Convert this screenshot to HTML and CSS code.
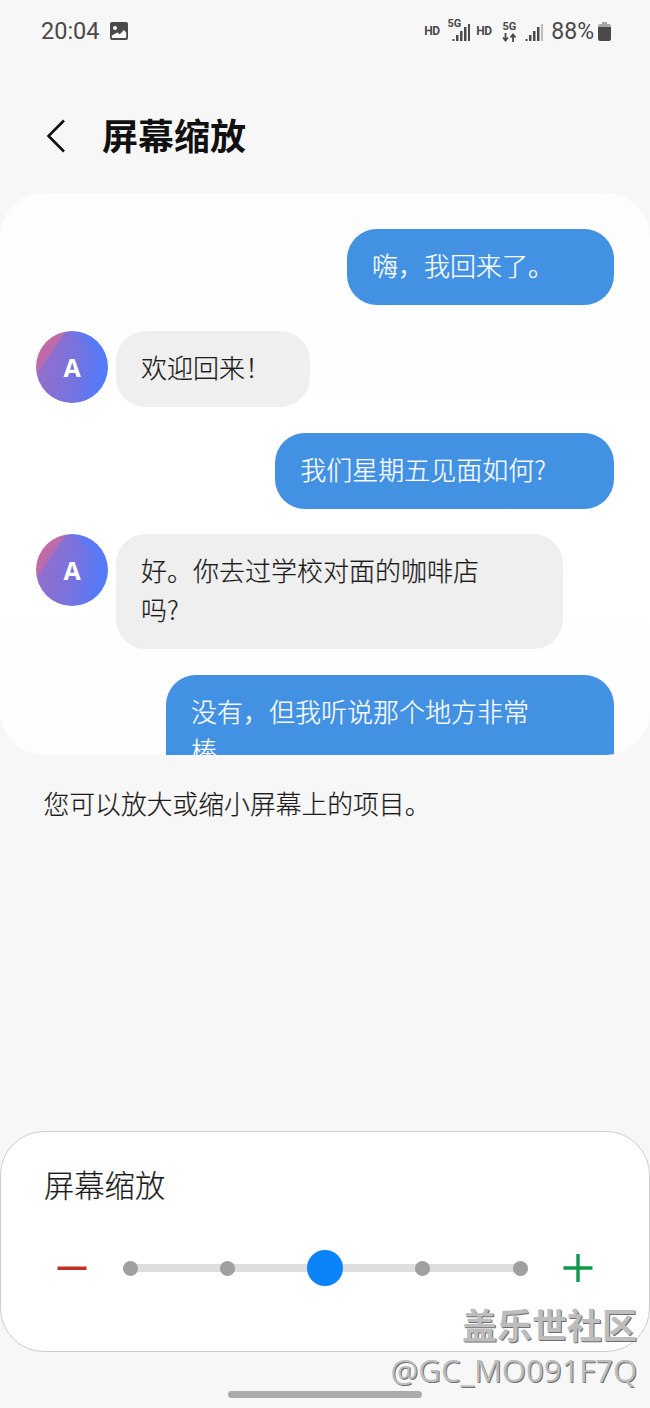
FILE: index.html
```html
<!DOCTYPE html>
<html lang="zh">
<head>
    <meta charset="UTF-8">
    <meta name="viewport" content="width=device-width, initial-scale=1.0">
    <title>屏幕缩放</title>
    <link rel="stylesheet" href="styles.css">
</head>
<body>
    <div class="status-bar">
        <div class="status-left">
            <span class="clock">20:04</span>
            <svg class="gallery-icon" width="18" height="18" viewBox="0 0 18 18">
                <path fill="#4a4a4a" fill-rule="evenodd" d="M2 0h14a2 2 0 0 1 2 2v14a2 2 0 0 1-2 2H2a2 2 0 0 1-2-2V2a2 2 0 0 1 2-2zM1.800 13.500V16h14.400v-5.500l-2.200-2.500-4.200 4.300-2.500-1.800zM5 4a2 2 0 1 0 0 4 2 2 0 0 0 0-4z"/>
            </svg>
        </div>
        <div class="status-right">
            <span class="net-label">HD</span>
            <div class="net-stack net-stack-first">
                <span class="net-small">5G</span>
            </div>
            <svg class="signal" width="18" height="22" viewBox="0 0 18 22">
                <rect x="0.500" y="19" width="2" height="2" fill="#4a4a4a"/>
                <rect x="4" y="15" width="2.500" height="6" fill="#4a4a4a"/>
                <rect x="8" y="11" width="2.500" height="10" fill="#4a4a4a"/>
                <rect x="12" y="7" width="2.500" height="14" fill="#4a4a4a"/>
                <rect x="16" y="4" width="2" height="17" fill="#4a4a4a"/>
            </svg>
            <span class="net-label net-label-second">HD</span>
            <div class="net-stack">
                <span class="net-small">5G</span>
                <svg width="15" height="9" viewBox="0 0 15 9">
                    <path d="M3.500 0v7M1 4.500l2.500 3 2.500-3M11 9V2M8.500 4.500L11 1.500l2.500 3" fill="none" stroke="#4a4a4a" stroke-width="1.800"/>
                </svg>
            </div>
            <svg class="signal signal-b" width="18" height="22" viewBox="0 0 18 22">
                <rect x="0.500" y="19" width="2" height="2" fill="#4a4a4a"/>
                <rect x="4" y="15" width="2.500" height="6" fill="#4a4a4a"/>
                <rect x="8" y="11" width="2.500" height="10" fill="#4a4a4a"/>
                <rect x="12" y="7" width="2.500" height="14" fill="#4a4a4a"/>
                <rect x="16" y="4" width="2" height="17" fill="#bdbdbd"/>
            </svg>
            <span class="battery-text">88%</span>
            <svg class="battery" width="13" height="19" viewBox="0 0 13 19">
                <path fill="#a8a8a8" d="M4 0h5v2h2a2 2 0 0 1 2 2v2H0V4a2 2 0 0 1 2-2h2z"/>
                <path fill="#4a4a4a" d="M0 5h13v12a2 2 0 0 1-2 2H2a2 2 0 0 1-2-2z"/>
            </svg>
        </div>
    </div>

    <header class="app-bar">
        <svg class="back-icon" width="20" height="34" viewBox="0 0 20 34">
            <path d="M18 1.500L2.500 17 18 32.500" fill="none" stroke="#111" stroke-width="2.600"/>
        </svg>
        <h1>屏幕缩放</h1>
    </header>

    <div class="chat-panel">
        <div class="msg msg-out"><div class="bubble bubble-hi">嗨，我回来了。</div></div>
        <div class="msg msg-in">
            <div class="avatar">A</div>
            <div class="bubble bubble-welcome">欢迎回来！</div>
        </div>
        <div class="msg msg-out"><div class="bubble bubble-friday">我们星期五见面如何?</div></div>
        <div class="msg msg-in">
            <div class="avatar">A</div>
            <div class="bubble bubble-wide">好。你去过学校对面的咖啡店<br>吗?</div>
        </div>
        <div class="msg msg-out"><div class="bubble bubble-wide">没有，但我听说那个地方非常<br>棒。</div></div>
    </div>

    <p class="hint">您可以放大或缩小屏幕上的项目。</p>

    <div class="zoom-card">
        <div class="zoom-title">屏幕缩放</div>
        <div class="zoom-row">
            <svg class="zoom-btn" width="30" height="30" viewBox="0 0 30 30">
                <rect x="0.500" y="13.500" width="29" height="3.500" fill="#c62f24"/>
            </svg>
            <div class="slider">
                <span class="dot"></span>
                <span class="dot"></span>
                <span class="thumb"></span>
                <span class="dot"></span>
                <span class="dot"></span>
            </div>
            <svg class="zoom-btn" width="30" height="30" viewBox="0 0 30 30">
                <path d="M0.500 15h29M15 1v28" fill="none" stroke="#12984a" stroke-width="3.400"/>
            </svg>
        </div>
    </div>

    <div class="home-bar"></div>

    <div class="watermark">
        <div class="wm-title">盖乐世社区</div>
        <div class="wm-user">@GC_MO091F7Q</div>
    </div>
</body>
</html>
```

FILE: styles.css
```css
/* General Styles */
body {
    font-family: "Noto Sans CJK SC", "Noto Sans", sans-serif;
    background-color: #f7f7f7;
    color: #1c1c1c;
    margin: 0;
    width: 650px;
    height: 1408px;
    position: relative;
    overflow: hidden;
}

/* Status Bar */
.status-bar {
    height: 62px;
    padding: 0 39px 0 41px;
    display: flex;
    justify-content: space-between;
    align-items: center;
    color: #4a4a4a;
}

.status-left,
.status-right {
    display: flex;
    align-items: center;
}

.clock {
    font-family: Roboto, sans-serif;
    font-size: 23.500px;
}

.gallery-icon {
    margin-left: 10px;
}

.net-label {
    width: 15px;
    font-family: Roboto, sans-serif;
    font-size: 12px;
    font-weight: 700;
    letter-spacing: -0.600px;
    white-space: nowrap;
}

.net-label-second {
    margin-left: 6px;
}

.net-stack {
    display: flex;
    flex-direction: column;
    align-items: center;
    margin-left: 11px;
    width: 14px;
}

.net-stack-first {
    align-self: flex-start;
    margin: 0 -9px 0 8px;
}

.net-small {
    font-family: Roboto, sans-serif;
    font-size: 11px;
    font-weight: 700;
    line-height: 12px;
}

.signal-b {
    margin-left: 9px;
}

.battery-text {
    font-family: Roboto, sans-serif;
    font-size: 23px;
    margin-left: 8px;
}

.battery {
    margin-left: 4px;
}

/* App Bar */
.app-bar {
    height: 131px;
    padding: 16px 0 0 46px;
    display: flex;
    align-items: center;
    box-sizing: border-box;
}

.app-bar h1 {
    margin: 0 0 4px 36px;
    font-size: 36px;
    font-weight: 700;
    color: #111;
}

/* Chat Panel */
.chat-panel {
    height: 562px;
    box-sizing: border-box;
    padding: 36px 36px 0;
    border-radius: 44px;
    background: linear-gradient(#fdfdfd, #ffffff 60%, #fdfdfd);
    overflow: hidden;
    display: flex;
    flex-direction: column;
    gap: 25.800px;
}

.msg {
    display: flex;
    flex-shrink: 0;
    align-items: flex-start;
}

.msg-out {
    justify-content: flex-end;
}

.bubble {
    padding: 16px 26px 21px 25px;
    border-radius: 30px;
    font-size: 26px;
    font-weight: 300;
    line-height: 39px;
    -webkit-text-stroke: 0.200px currentColor;
}

.bubble-hi {
    padding-right: 60px;
}

.bubble-welcome {
    padding-right: 39px;
}

.bubble-friday {
    padding-right: 68px;
}

.bubble-wide {
    width: 448px;
    box-sizing: border-box;
}

.msg-out .bubble {
    background-color: #4291e2;
    color: #fff;
}

.msg-in .bubble {
    background-color: #efefef;
    margin-left: 8px;
}

.msg-in .bubble-wide {
    width: 447px;
}

.avatar {
    width: 72px;
    height: 72px;
    border-radius: 50%;
    background:
        linear-gradient(125deg, #cc6aa0 0, #bb6bac 24.700%, transparent 25%),
        linear-gradient(45deg, transparent 72%, #5a7af5 82%),
        linear-gradient(100deg, #9a6ec6 0, #7a72dc 50%, #4f7cfd 92%);
    color: #fff;
    font-family: "Open Sans", sans-serif;
    font-weight: 700;
    font-size: 25px;
    display: flex;
    align-items: center;
    justify-content: center;
}

/* Hint */
.hint {
    margin: 29px 0 0 43.500px;
    font-size: 25.800px;
    font-weight: 300;
    line-height: 38px;
    -webkit-text-stroke: 0.200px currentColor;
}

/* Zoom Card */
.zoom-card {
    position: absolute;
    left: 0;
    right: 0;
    top: 1131px;
    height: 221px;
    box-sizing: border-box;
    padding: 30px 0 0 43px;
    background: #fff;
    border: 1px solid #cdcdcd;
    border-radius: 44px;
}

.zoom-title {
    font-size: 30.300px;
    font-weight: 300;
    line-height: 44px;
    -webkit-text-stroke: 0.200px currentColor;
}

.zoom-row {
    display: flex;
    align-items: center;
    margin-top: 44px;
    margin-left: 13px;
}

.zoom-btn {
    flex-shrink: 0;
}

.slider {
    width: 405px;
    margin: 0 35.500px;
    display: flex;
    justify-content: space-between;
    align-items: center;
    height: 36px;
    background: linear-gradient(#dedede, #dedede) center / 390px 8px no-repeat;
}

.dot {
    width: 15px;
    height: 15px;
    border-radius: 50%;
    background-color: #a0a0a0;
}

.thumb {
    width: 36px;
    height: 36px;
    margin: 0 -10.500px;
    border-radius: 50%;
    background-color: #0a84f8;
}

/* Home Bar */
.home-bar {
    position: absolute;
    left: 228px;
    top: 1391px;
    width: 194px;
    height: 7px;
    border-radius: 4px;
    background-color: #ababab;
}

/* Watermark */
.watermark {
    position: absolute;
    right: 13px;
    top: 1300px;
    text-align: right;
    color: #bdbdbd;
    text-shadow: 1px 1px 0 #6f6f6f;
}

.wm-title {
    font-size: 35px;
    font-weight: 700;
    line-height: 48px;
}

.wm-user {
    font-family: "Open Sans", sans-serif;
    font-size: 31px;
    line-height: 44px;
}
```
